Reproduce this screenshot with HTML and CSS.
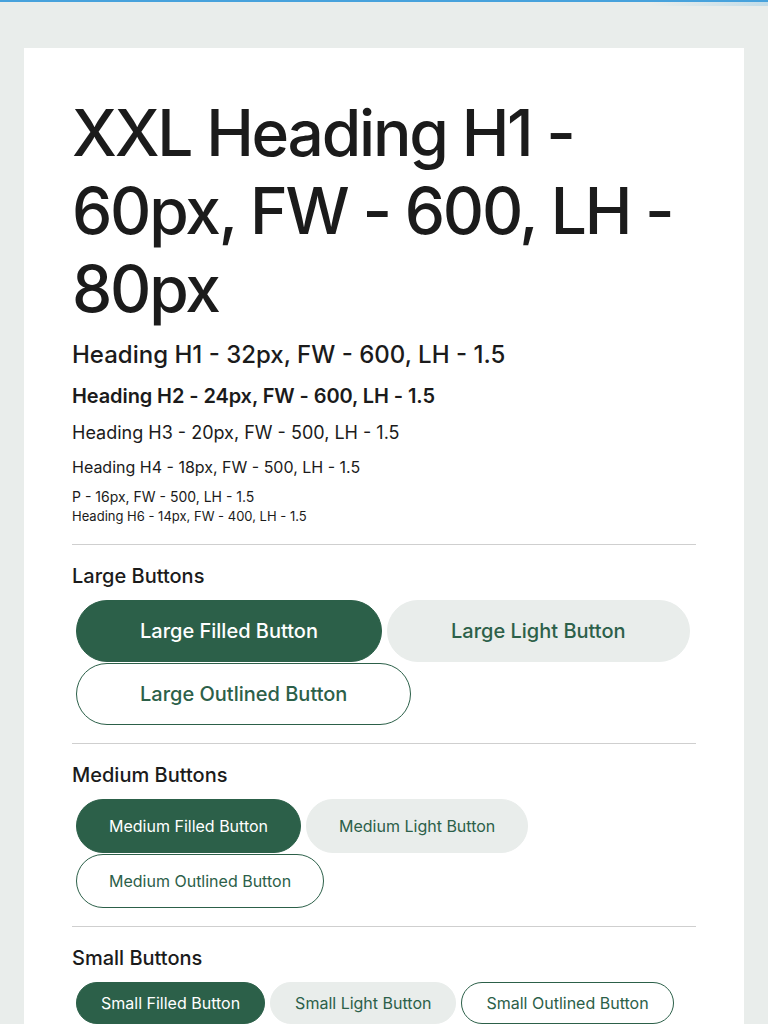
FILE: index.html
```html
<!DOCTYPE html>
<html lang="en">
<head>
<meta charset="utf-8">
<title>Typography &amp; Buttons</title>
<link rel="stylesheet" href="styles.css">
</head>
<body>
<div class="topbar"></div>
<main class="page">
  <section class="card">
    <h1 class="xxl">XXL Heading H1 - 60px, FW - 600, LH - 80px</h1>
    <h1 class="h1">Heading H1 - 32px, FW - 600, LH - 1.5</h1>
    <h2 class="h2">Heading H2 - 24px, FW - 600, LH - 1.5</h2>
    <h3 class="h3">Heading H3 - 20px, FW - 500, LH - 1.5</h3>
    <h4 class="h4">Heading H4 - 18px, FW - 500, LH - 1.5</h4>
    <p class="p">P - 16px, FW - 500, LH - 1.5</p>
    <h6 class="h6">Heading H6 - 14px, FW - 400, LH - 1.5</h6>

    <div class="group">
      <h3 class="group-title">Large Buttons</h3>
      <div class="btns">
        <button class="btn lg filled">Large Filled Button</button>
        <button class="btn lg light">Large Light Button</button>
        <button class="btn lg outlined">Large Outlined Button</button>
      </div>
    </div>

    <div class="group">
      <h3 class="group-title">Medium Buttons</h3>
      <div class="btns">
        <button class="btn md filled">Medium Filled Button</button>
        <button class="btn md light">Medium Light Button</button>
        <button class="btn md outlined">Medium Outlined Button</button>
      </div>
    </div>

    <div class="group">
      <h3 class="group-title">Small Buttons</h3>
      <div class="btns">
        <button class="btn sm filled">Small Filled Button</button>
        <button class="btn sm light">Small Light Button</button>
        <button class="btn sm outlined">Small Outlined Button</button>
      </div>
    </div>
  </section>
</main>
</body>
</html>
```
FILE: styles.css
```css
* { box-sizing: border-box; }
html, body { margin: 0; padding: 0; }
body {
  background: #e9edeb;
  font-family: Inter, "Noto Sans", sans-serif;
  color: #1b1b1b;
  overflow: hidden;
  height: 1024px;
}
.topbar {
  position: relative;
  height: 2px;
  background: #47a2dc;
}
.topbar::after {
  content: "";
  position: absolute;
  right: 0;
  top: 2px;
  width: 120px;
  height: 4px;
  background: linear-gradient(to right, rgba(120, 190, 230, 0), rgba(120, 190, 230, 0.35));
  border-radius: 0 0 0 8px;
}
.page {
  padding: 46px 24px 0;
}
.card {
  background: #fff;
  padding: 46px 48px 40px;
  min-height: 1000px;
}
h1, h2, h3, h4, h5, h6, p { margin: 0; }
.xxl {
  font-size: 64px;
  line-height: 78px;
  font-weight: 500;
  letter-spacing: -2.2px;
}
.h1 { font-size: 24px; font-weight: 500; line-height: 36px; margin-top: 9px; }
.h2 { font-size: 20px; font-weight: 600; line-height: 30px; margin-top: 8px; letter-spacing: -0.1px; }
.h3 { font-size: 18px; font-weight: 400; line-height: 27px; margin-top: 8px; }
.h4 { font-size: 16px; font-weight: 400; line-height: 24px; margin-top: 9px; }
.p  { font-size: 14px; font-weight: 400; line-height: 21px; margin-top: 7px; }
.h6 { font-size: 13px; font-weight: 400; line-height: 19px; margin-top: 0; }

.group {
  border-top: 1px solid #cfcfcf;
  margin-top: 18px;
  padding-top: 16px;
}
.group-title {
  font-size: 20px;
  font-weight: 500;
  line-height: 30px;
  margin-bottom: 9px;
}
.btns {
  display: flex;
  flex-wrap: wrap;
  gap: 1px 5px;
  padding-left: 4px;
}
.btn {
  font-family: Inter, "Noto Sans", sans-serif;
  border-radius: 999px;
  border: 1px solid transparent;
  cursor: pointer;
}
.filled { background: #2c6049; border-color: #2c6049; color: #fff; }
.light { background: #e9edeb; border-color: #e9edeb; color: #2c6049; }
.outlined { background: #fff; border-color: #2c6049; color: #2c6049; }
.lg { height: 62px; padding: 0 63px; font-size: 20px; font-weight: 500; }
.md { height: 54px; padding: 0 32px; font-size: 16px; font-weight: 400; }
.sm { height: 42px; padding: 0 24px; font-size: 16px; font-weight: 400; }
```
